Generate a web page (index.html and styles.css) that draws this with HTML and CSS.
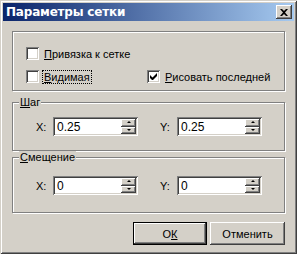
FILE: index.html
```html
<!DOCTYPE html>
<html lang="ru">
<head>
    <meta charset="UTF-8">
    <title>Параметры сетки</title>
    <link rel="stylesheet" href="styles.css">
</head>
<body>
    <div class="window">
        <div class="titlebar">
            <span class="title">Параметры сетки</span>
            <button class="close-btn">
                <svg width="8" height="7" viewBox="0 0 8 7"><path d="M0 0h2l2 2 2-2h2L5 3.5 8 7H6L4 5 2 7H0l3-3.5z" fill="#000"/></svg>
            </button>
        </div>
        <div class="client">
            <div class="group group-snap">
                <label class="check row1"><span class="box"></span><span><u>П</u>ривязка к сетке</span></label>
                <div class="row2">
                    <label class="check first"><span class="box"></span><span class="focus-text"><u>В</u>идимая</span></label>
                    <label class="check"><span class="box">
                        <svg width="7" height="7" viewBox="0 0 7 7"><path d="M0 2v3l2 2h1l4-4V0L2.5 4.5z" fill="#000"/></svg>
                    </span><span><u>Р</u>исовать последней</span></label>
                </div>
            </div>
            <div class="group group-step">
                <span class="legend"><u>Ш</u>аг</span>
                <div class="fields">
                    <span class="flabel">X:</span>
                    <div class="spin"><span class="value">0.25</span><span class="arrows"><span class="arr up"></span><span class="arr down"></span></span></div>
                    <span class="flabel ylabel">Y:</span>
                    <div class="spin"><span class="value">0.25</span><span class="arrows"><span class="arr up"></span><span class="arr down"></span></span></div>
                </div>
            </div>
            <div class="group group-offset">
                <span class="legend"><u>С</u>мещение</span>
                <div class="fields">
                    <span class="flabel">X:</span>
                    <div class="spin"><span class="value">0</span><span class="arrows"><span class="arr up"></span><span class="arr down"></span></span></div>
                    <span class="flabel ylabel">Y:</span>
                    <div class="spin"><span class="value">0</span><span class="arrows"><span class="arr up"></span><span class="arr down"></span></span></div>
                </div>
            </div>
            <div class="buttons">
                <button class="btn default">О<u>К</u></button>
                <button class="btn">Отменить</button>
            </div>
        </div>
    </div>
</body>
</html>
```

FILE: styles.css
```css
body, html {
    margin: 0;
    padding: 0;
    background: #d4d0c8;
}
.window {
    width: 297px;
    height: 254px;
    box-sizing: border-box;
    background: #d4d0c8;
    padding: 3px;
    box-shadow: inset 1px 1px 0 #d4d0c8, inset -1px -1px 0 #404040, inset 2px 2px 0 #fff, inset -2px -2px 0 #808080;
    font-family: "Liberation Sans", Arial, sans-serif;
    font-size: 11px;
    color: #000;
    display: flex;
    flex-direction: column;
}
.titlebar {
    height: 18px;
    background: linear-gradient(90deg, #0a246a, #a6caf0);
    display: flex;
    align-items: center;
    justify-content: space-between;
    padding: 0 2px 0 3px;
}
.title {
    color: #fff;
    font-weight: bold;
    font-size: 12px;
    font-family: "DejaVu Sans", sans-serif;
    letter-spacing: -0.2px;
}
.close-btn {
    width: 16px;
    height: 14px;
    padding: 0;
    border: 0;
    background: #d4d0c8;
    box-shadow: inset -1px -1px 0 #404040, inset 1px 1px 0 #fff, inset -2px -2px 0 #808080;
    display: flex;
    align-items: center;
    justify-content: center;
}
.client {
    flex: 1;
    padding: 10px 9px 0 9px;
    display: flex;
    flex-direction: column;
}
.group {
    position: relative;
    border: 1px solid #808080;
    box-shadow: 1px 1px 0 #fff, inset 1px 1px 0 #fff;
    box-sizing: border-box;
    width: 273px;
}
.group-snap {
    height: 60px;
    padding: 14px 0 0 13px;
}
.group-step {
    height: 49px;
    margin-top: 11px;
    padding-top: 14px;
}
.group-offset {
    height: 56px;
    margin-top: 6px;
    padding-top: 18px;
}
.legend {
    position: absolute;
    top: -7px;
    left: 6px;
    padding: 0 1px;
    background: #d4d0c8;
    line-height: 13px;
}
.check {
    display: flex;
    align-items: center;
    height: 15px;
    gap: 5px;
}
.row2 {
    display: flex;
    margin-top: 8px;
}
.first {
    width: 121px;
    flex: none;
}
.box {
    width: 13px;
    height: 13px;
    box-sizing: border-box;
    background: #fff;
    box-shadow: inset 1px 1px 0 #808080, inset -1px -1px 0 #fff, inset 2px 2px 0 #404040, inset -2px -2px 0 #d4d0c8;
    display: flex;
    align-items: center;
    justify-content: center;
}
.focus-text {
    outline: 1px dotted #000;
    padding: 0 1px;
    margin-left: -1px;
}
.fields {
    display: flex;
    align-items: center;
    padding-left: 23px;
}
.flabel {
    width: 17px;
    color: #000;
}
.ylabel {
    margin-left: 22px;
    width: 17px;
}
.spin {
    width: 85px;
    height: 19px;
    box-sizing: border-box;
    background: #fff;
    box-shadow: inset 1px 1px 0 #808080, inset -1px -1px 0 #fff, inset 2px 2px 0 #404040, inset -2px -2px 0 #d4d0c8;
    display: flex;
    align-items: center;
    justify-content: space-between;
    padding: 2px 2px 2px 4px;
    font-size: 12px;
}
.arrows {
    display: flex;
    flex-direction: column;
    width: 15px;
    height: 15px;
}
.arr {
    flex: 1;
    background: #d4d0c8;
    box-shadow: inset -1px -1px 0 #404040, inset 1px 1px 0 #fff, inset -2px -2px 0 #808080;
    display: flex;
    align-items: center;
    justify-content: center;
}
.arr::after {
    content: "";
    border-left: 2px solid transparent;
    border-right: 2px solid transparent;
}
.up::after {
    border-bottom: 2px solid #000;
    margin-top: -1px;
}
.down::after {
    border-top: 2px solid #000;
    margin-top: -1px;
}
.buttons {
    display: flex;
    justify-content: flex-end;
    gap: 3px;
    margin-top: 9px;
}
.btn {
    width: 75px;
    height: 23px;
    padding: 0;
    border: 0;
    background: #d4d0c8;
    font-family: "Liberation Sans", Arial, sans-serif;
    font-size: 11px;
    color: #000;
    box-shadow: inset -1px -1px 0 #404040, inset 1px 1px 0 #fff, inset -2px -2px 0 #808080;
}
.btn.default {
    width: 74px;
    box-shadow: inset 0 0 0 1px #000, inset -2px -2px 0 #404040, inset 2px 2px 0 #fff, inset -3px -3px 0 #808080;
}
```
